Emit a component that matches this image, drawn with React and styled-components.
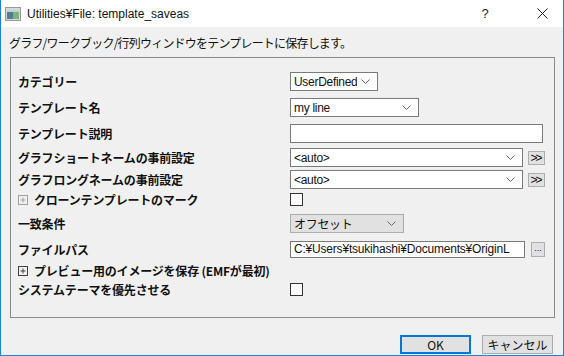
import React from 'react';
import styled, { createGlobalStyle } from 'styled-components';

const GlobalStyle = createGlobalStyle`
    html, body {
        margin:0;
        padding:0;
        background:#f0f0f0;
    }
    * {
        box-sizing:border-box;
    }
`

const JP = `"Noto Sans CJK JP", "Noto Sans", sans-serif`;
const FIELD = `"Liberation Sans", "Noto Sans CJK JP", sans-serif`;

const Chevron = () => (
    <svg width="9" height="5" viewBox="0 0 9 5">
        <path d="M0.5 0.5 L4.5 4.5 L8.5 0.5" fill="none" stroke="#666" strokeWidth="1" />
    </svg>
)

const Expander = ({ dim }) => (
    <svg width="10" height="10" viewBox="0 0 10 10">
        <rect x="0.5" y="0.5" width="9" height="9" fill="none" stroke={dim ? '#a0a0a0' : '#404040'} />
        <path d="M2.5 5 H7.5 M5 2.5 V7.5" stroke={dim ? '#a0a0a0' : '#404040'} />
    </svg>
)

const Combo = ({ value, width, flat }) => (
    <ComboBox $width={width} $flat={flat}>
        <span>{value}</span>
        <Chevron />
    </ComboBox>
)

const App = () => {
    return(
        <Window>
            <GlobalStyle />
            <TitleBar>
                <TitleIcon>
                    <svg width="16" height="14" viewBox="0 0 16 14">
                        <rect x="0.5" y="0.5" width="15" height="13" fill="#d8d8d8" stroke="#9a9a9a" />
                        <rect x="2" y="3" width="6" height="9" fill="#4f7f8f" />
                        <rect x="8" y="3" width="6" height="9" fill="#7fb27f" />
                        <rect x="2" y="3" width="12" height="2" fill="#bcd0d8" />
                    </svg>
                </TitleIcon>
                <TitleText>Utilities¥File: template_saveas</TitleText>
                <TitleButton>?</TitleButton>
                <CloseButton>
                    <svg width="11" height="11" viewBox="0 0 11 11">
                        <path d="M0.5 0.5 L10.5 10.5 M10.5 0.5 L0.5 10.5" stroke="#222" strokeWidth="1" />
                    </svg>
                </CloseButton>
            </TitleBar>
            <Body>
                <Description>グラフ/ワークブック/行列ウィンドウをテンプレートに保存します。</Description>
                <Panel>
                    <Row $h={25}>
                        <Label>カテゴリー</Label>
                        <Combo value="UserDefined" width={88} />
                    </Row>
                    <Row $h={27}>
                        <Label>テンプレート名</Label>
                        <Combo value="my line" width={129} />
                    </Row>
                    <Row $h={24}>
                        <Label>テンプレート説明</Label>
                        <TextBox $width={253} $h={19} />
                    </Row>
                    <Row $h={25}>
                        <Label>グラフショートネームの事前設定</Label>
                        <Controls>
                            <Combo value="<auto>" width={233} />
                            <SmallButton $w={17} $h={14} $tight>&gt;&gt;</SmallButton>
                        </Controls>
                    </Row>
                    <Row $h={19}>
                        <Label>グラフロングネームの事前設定</Label>
                        <Controls>
                            <Combo value="<auto>" width={233} />
                            <SmallButton $w={17} $h={14} $tight>&gt;&gt;</SmallButton>
                        </Controls>
                    </Row>
                    <Row $h={21}>
                        <Label><Expander dim />クローンテンプレートのマーク</Label>
                        <CheckBox />
                    </Row>
                    <Row $h={27}>
                        <Label>一致条件</Label>
                        <Combo value="オフセット" width={114} flat />
                    </Row>
                    <Row $h={24}>
                        <Label>ファイルパス</Label>
                        <Controls $gap={6}>
                            <TextBox $width={235} $h={17}>C:¥Users¥tsukihashi¥Documents¥OriginL</TextBox>
                            <SmallButton $w={14} $h={15}>...</SmallButton>
                        </Controls>
                    </Row>
                    <Row $h={19}>
                        <Label $wide><Expander />プレビュー用のイメージを保存 (EMFが最初)</Label>
                    </Row>
                    <Row $h={19}>
                        <Label>システムテーマを優先させる</Label>
                        <CheckBox />
                    </Row>
                </Panel>
                <Footer>
                    <DialogButton $primary>OK</DialogButton>
                    <DialogButton>キャンセル</DialogButton>
                </Footer>
            </Body>
        </Window>
    )
}

export default App;

const Window = styled.div`
    width:564px;
    height:356px;
    display:flex;
    flex-direction:column;
    border:1px solid #1883d7;
    border-top:none;
    background:#f0f0f0;
    overflow:hidden;
`
const TitleBar = styled.div`
    height:27px;
    flex:none;
    display:flex;
    align-items:center;
    background:white;
    padding-left:4px;
`
const TitleIcon = styled.div`
    width:16px;
    height:14px;
    display:flex;
    margin-right:6px;
`
const TitleText = styled.div`
    flex:1;
    font-family:"Liberation Sans", sans-serif;
    font-size:12px;
    color:#111;
`
const TitleButton = styled.div`
    width:20px;
    margin-right:24px;
    font-family:"Liberation Sans", sans-serif;
    font-size:13px;
    text-align:center;
    color:#222;
`
const CloseButton = styled.div`
    width:46px;
    display:flex;
    justify-content:center;
    margin-right:-2px;
`
const Body = styled.div`
    flex:1;
    display:flex;
    flex-direction:column;
    padding:0 8px 0 8px;
    font-family:${JP};
    font-size:12px;
    color:#111;
`
const Description = styled.div`
    height:30px;
    display:flex;
    align-items:center;
    padding-top:1px;
    letter-spacing:-0.8px;
`
const Panel = styled.div`
    margin-left:1px;
    width:545px;
    height:261px;
    border:1px solid #8a8a8a;
    padding:11px 0 0 7px;
    display:flex;
    flex-direction:column;
`
const Row = styled.div`
    height:${p => p.$h}px;
    display:grid;
    grid-template-columns:272px 1fr;
    align-items:center;
`
const Label = styled.div`
    display:flex;
    align-items:center;
    gap:6px;
    font-weight:bold;
    font-size:12px;
    white-space:nowrap;
    letter-spacing:-0.2px;
    ${p => p.$wide && 'grid-column:1 / 3;'}
`
const Controls = styled.div`
    display:flex;
    align-items:center;
    gap:${p => p.$gap || 5}px;
`
const ComboBox = styled.div`
    width:${p => p.$width}px;
    height:19px;
    display:flex;
    align-items:center;
    justify-content:space-between;
    gap:4px;
    padding:0 7px 0 3px;
    background:${p => p.$flat ? '#e1e1e1' : 'white'};
    border:1px solid ${p => p.$flat ? '#adadad' : '#7a7a7a'};
    font-family:${FIELD};
    font-size:12px;
    letter-spacing:-0.3px;
    span {
        white-space:nowrap;
        overflow:hidden;
    }
    svg {
        flex:none;
    }
`
const TextBox = styled.div`
    width:${p => p.$width}px;
    height:${p => p.$h}px;
    background:white;
    border:1px solid #7a7a7a;
    padding:0 3px;
    display:flex;
    align-items:center;
    font-family:${FIELD};
    font-size:12px;
    letter-spacing:-0.2px;
    white-space:nowrap;
    overflow:hidden;
`
const SmallButton = styled.div`
    width:${p => p.$w}px;
    height:${p => p.$h}px;
    background:#e1e1e1;
    border:1px solid #adadad;
    display:flex;
    align-items:${p => p.$tight ? 'center' : 'flex-end'};
    justify-content:center;
    font-family:"Liberation Sans", sans-serif;
    font-size:${p => p.$tight ? 12 : 9}px;
    line-height:1;
    letter-spacing:${p => p.$tight ? -2 : 0}px;
    padding:${p => p.$tight ? '0 2px 0 0' : '0 0 3px 0'};
`
const CheckBox = styled.div`
    width:13px;
    height:13px;
    background:white;
    border:1px solid #333;
`
const Footer = styled.div`
    flex:1;
    display:flex;
    justify-content:flex-end;
    align-items:flex-start;
    gap:11px;
    padding-top:17px;
    padding-right:2px;
`
const DialogButton = styled.div`
    width:71px;
    height:19px;
    display:flex;
    align-items:center;
    justify-content:center;
    background:#e1e1e1;
    border:${p => p.$primary ? '2px solid #0078d7' : '1px solid #adadad'};
    font-size:12px;
`
